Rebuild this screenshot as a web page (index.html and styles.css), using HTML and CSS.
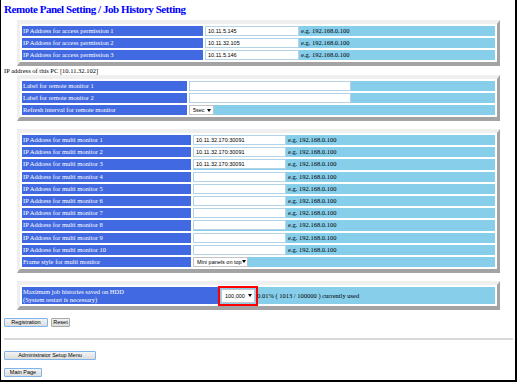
FILE: index.html
```html
<!DOCTYPE html>
<html>
<head>
<meta charset="utf-8">
<link rel="stylesheet" href="styles.css">
</head>
<body>
<div class="frame">
  <h1 class="title">Remote Panel Setting / Job History Setting</h1>

  <table class="panel">
    <tr><td class="lbl w180">IP Address for access permission 1</td><td class="val"><input class="inp w94" type="text" value="10.11.5.145"><span class="eg">e.g. 192.168.0.100</span></td></tr>
    <tr><td class="lbl">IP Address for access permission 2</td><td class="val"><input class="inp w94" type="text" value="10.11.32.105"><span class="eg">e.g. 192.168.0.100</span></td></tr>
    <tr><td class="lbl">IP Address for access permission 3</td><td class="val"><input class="inp w94" type="text" value="10.11.5.146"><span class="eg">e.g. 192.168.0.100</span></td></tr>
  </table>

  <p class="pcaddr">IP address of this PC [10.11.32.102]</p>

  <table class="panel">
    <tr><td class="lbl w164">Label for remote monitor 1</td><td class="val"><input class="inp w162" type="text" value=""></td></tr>
    <tr><td class="lbl">Label for remote monitor 2</td><td class="val"><input class="inp w162" type="text" value=""></td></tr>
    <tr><td class="lbl">Refresh interval for remote monitor</td><td class="val"><span class="sel w25"><span class="seltext">5sec</span><span class="arrow"></span></span></td></tr>
  </table>

  <table class="panel multi">
    <tr><td class="lbl w168">IP Address for multi monitor 1</td><td class="val"><input class="inp w93" type="text" value="10.11.32.170:30091"><span class="eg">e.g. 192.168.0.100</span></td></tr>
    <tr><td class="lbl">IP Address for multi monitor 2</td><td class="val"><input class="inp w93" type="text" value="10.11.32.170:30091"><span class="eg">e.g. 192.168.0.100</span></td></tr>
    <tr><td class="lbl">IP Address for multi monitor 3</td><td class="val"><input class="inp w93" type="text" value="10.11.32.170:30091"><span class="eg">e.g. 192.168.0.100</span></td></tr>
    <tr><td class="lbl">IP Address for multi monitor 4</td><td class="val"><input class="inp w93" type="text" value=""><span class="eg">e.g. 192.168.0.100</span></td></tr>
    <tr><td class="lbl">IP Address for multi monitor 5</td><td class="val"><input class="inp w93" type="text" value=""><span class="eg">e.g. 192.168.0.100</span></td></tr>
    <tr><td class="lbl">IP Address for multi monitor 6</td><td class="val"><input class="inp w93" type="text" value=""><span class="eg">e.g. 192.168.0.100</span></td></tr>
    <tr><td class="lbl">IP Address for multi monitor 7</td><td class="val"><input class="inp w93" type="text" value=""><span class="eg">e.g. 192.168.0.100</span></td></tr>
    <tr><td class="lbl">IP Address for multi monitor 8</td><td class="val"><input class="inp w93" type="text" value=""><span class="eg">e.g. 192.168.0.100</span></td></tr>
    <tr><td class="lbl">IP Address for multi monitor 9</td><td class="val"><input class="inp w93" type="text" value=""><span class="eg">e.g. 192.168.0.100</span></td></tr>
    <tr><td class="lbl">IP Address for multi monitor 10</td><td class="val"><input class="inp w93" type="text" value=""><span class="eg">e.g. 192.168.0.100</span></td></tr>
    <tr><td class="lbl">Frame style for multi monitor</td><td class="val"><span class="sel w55"><span class="seltext">Mini panels on top</span><span class="arrow"></span></span></td></tr>
  </table>

  <table class="panel hdd">
    <tr><td class="lbl w195">Maximum job histories saved on HDD<br>(System restart is necessary)</td><td class="val"><span class="sel tall w34 marked"><span class="seltext">100,000</span><span class="arrow"></span></span><span class="usage">0.01% ( 1013 / 100000 ) currently used</span></td></tr>
  </table>

  <div class="btnrow reg">
    <button class="btn w44" type="button">Registration</button>
    <button class="btn gray w19" type="button">Reset</button>
  </div>

  <hr class="rule">

  <div class="btnrow">
    <button class="btn w92" type="button">Administrator Setup Menu</button>
  </div>
  <div class="btnrow main">
    <button class="btn w38" type="button">Main Page</button>
  </div>
</div>
</body>
</html>
```

FILE: styles.css
```css
html, body {
  margin: 0;
  padding: 0;
  background: #ffffff;
}

body {
  font-family: "Liberation Serif", "Times New Roman", serif;
  font-size: 6.5px;
  color: #000000;
}

.frame {
  box-sizing: border-box;
  width: 517px;
  height: 382px;
  border-style: solid;
  border-color: #000000;
  border-width: 0 2px 2px 1px;
  padding: 2px 2px 0 3px;
  overflow: hidden;
}

.title {
  margin: 0 0 4px 0;
  font-size: 11px;
  line-height: 14px;
  letter-spacing: -0.45px;
  font-weight: bold;
  color: #0000ff;
  white-space: nowrap;
}

.panel {
  box-sizing: border-box;
  width: 483px;
  margin-left: 13px;
  border-collapse: separate;
  border-spacing: 2px;
  border-style: solid;
  border-width: 4px 3px;
  border-color: #efefef #a3a3a3 #a3a3a3 #efefef;
  background: #ffffff;
}

.panel td {
  padding: 0;
  height: 10px;
  line-height: 10px;
  white-space: nowrap;
  vertical-align: middle;
}

.multi td {
  height: 10.2px;
}

.lbl {
  background: #4169e1;
  color: #ffffff;
  padding-left: 1px !important;
}

.val {
  background: #87ceeb;
}

.w180 { width: 180px; }
.w164 { width: 164px; }
.w168 { width: 168px; }
.w195 { width: 195px; }

.inp {
  box-sizing: border-box;
  height: 10px;
  margin: 0;
  padding: 0 2px;
  border: 1px solid #b5d3e6;
  background: #ffffff;
  font-family: "Liberation Sans", Arial, sans-serif;
  font-size: 5.5px;
  color: #000000;
  vertical-align: top;
  outline: none;
}

.w94 { width: 94px; }
.w93 { width: 93px; }
.w162 { width: 162px; }

.eg {
  margin-left: 2px;
}

.pcaddr {
  margin: 0;
  height: 9px;
  line-height: 9px;
}

.multi {
  margin-top: 8px;
}

.hdd {
  margin-top: 8px;
}

.hdd td {
  height: 17px;
  line-height: 8px;
}

.sel {
  box-sizing: border-box;
  display: inline-flex;
  align-items: center;
  justify-content: space-between;
  height: 10px;
  padding: 0 2px 0 3px;
  background: #ffffff;
  border: 1px solid #c4c4c4;
  font-family: "Liberation Sans", Arial, sans-serif;
  font-size: 5.5px;
  line-height: 8px;
  vertical-align: top;
}

.sel.tall {
  height: 14px;
  margin-left: 1px;
  vertical-align: middle;
}

.marked {
  outline: 2px solid #ff0000;
  outline-offset: 1px;
}

.w25 { width: 25px; }
.w55 { width: 55px; }
.w34 { width: 34px; }

.arrow {
  width: 0;
  height: 0;
  border-left: 2px solid transparent;
  border-right: 2px solid transparent;
  border-top: 3px solid #000000;
}

.usage {
  margin-left: 2px;
  vertical-align: middle;
}

.btnrow {
  display: flex;
  gap: 3px;
  height: 9px;
}

.btnrow.reg {
  margin-top: 8px;
}

.btnrow.main {
  margin-top: 8px;
}

.btn {
  box-sizing: border-box;
  height: 9px;
  margin: 0;
  padding: 0;
  border: 1px solid #7eb4ea;
  border-radius: 1px;
  background: linear-gradient(#f4f4f4, #dcdcdc);
  font-family: "Liberation Sans", Arial, sans-serif;
  font-size: 5.5px;
  line-height: 7px;
  color: #000000;
}

.btn.gray {
  border-color: #a8a8a8;
}

.w44 { width: 44px; }
.w19 { width: 19px; }
.w92 { width: 92px; }
.w38 { width: 38px; }

.rule {
  margin: 11px 0 11px 0;
  height: 0;
  border: 0;
  border-top: 2px solid #d8d8d8;
}
```
